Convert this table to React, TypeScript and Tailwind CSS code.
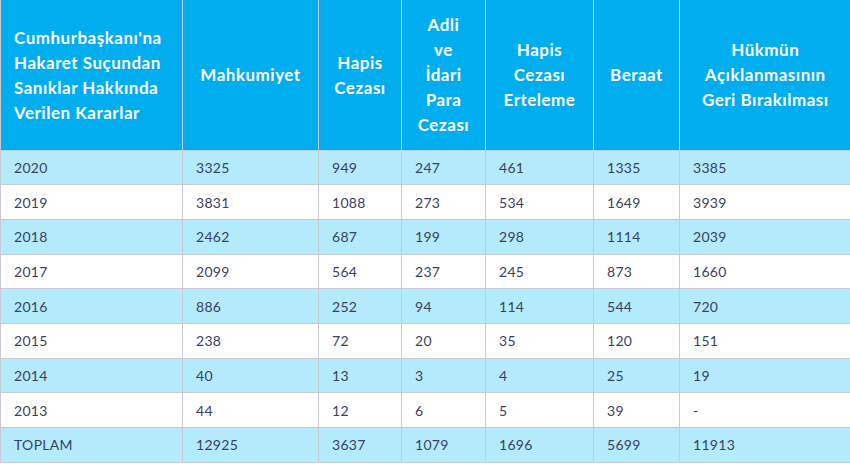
const headers = [
  { label: ["Cumhurbaşkanı'na", "Hakaret Suçundan", "Sanıklar Hakkında", "Verilen Kararlar"], left: true },
  { label: ["Mahkumiyet"] },
  { label: ["Hapis", "Cezası"] },
  { label: ["Adli", "ve", "İdari", "Para", "Cezası"] },
  { label: ["Hapis", "Cezası", "Erteleme"] },
  { label: ["Beraat"] },
  { label: ["Hükmün", "Açıklanmasının", "Geri Bırakılması"] },
]

const widths = ["w-[182px]", "w-[136px]", "w-[83px]", "w-[84px]", "w-[108px]", "w-[86px]", "w-[171px]"]

const rows = [
  ["2020", "3325", "949", "247", "461", "1335", "3385"],
  ["2019", "3831", "1088", "273", "534", "1649", "3939"],
  ["2018", "2462", "687", "199", "298", "1114", "2039"],
  ["2017", "2099", "564", "237", "245", "873", "1660"],
  ["2016", "886", "252", "94", "114", "544", "720"],
  ["2015", "238", "72", "20", "35", "120", "151"],
  ["2014", "40", "13", "3", "4", "25", "19"],
  ["2013", "44", "12", "6", "5", "39", "-"],
  ["TOPLAM", "12925", "3637", "1079", "1696", "5699", "11913"],
]

export default function App() {
  return (
    <div className="w-[850px] h-[464px] bg-white overflow-hidden font-['Lato','Liberation_Sans',sans-serif]">
      <table className="w-[850px] table-fixed border-collapse">
        <thead>
          <tr className="h-[150px] bg-[#00adef]">
            {headers.map((h, i) => (
              <th
                key={i}
                className={`${widths[i]} border border-[#c9cbd3] border-t-0 ${i === 6 ? "border-r-0" : ""} ${h.left ? "pl-[13px] pr-0 text-left" : "px-0 text-center"} align-middle text-white font-bold text-[17px] tracking-[0.5px] leading-[25px]`}
              >
                {h.label.map((l, j) => (
                  <div key={j} className="whitespace-nowrap">{l}</div>
                ))}
              </th>
            ))}
          </tr>
        </thead>
        <tbody>
          {rows.map((r, i) => (
            <tr key={i} className={`h-[34.7px] ${i % 2 === 0 ? "bg-[#b3eafc]" : "bg-white"}`}>
              {r.map((c, j) => (
                <td
                  key={j}
                  className={`border border-[#c9cbd3] ${j === 6 ? "border-r-0" : ""} px-[13px] py-0 text-left text-[14px] tracking-[0.3px] text-[#3d3f5e] align-middle`}
                >
                  {c}
                </td>
              ))}
            </tr>
          ))}
        </tbody>
      </table>
    </div>
  )
}
